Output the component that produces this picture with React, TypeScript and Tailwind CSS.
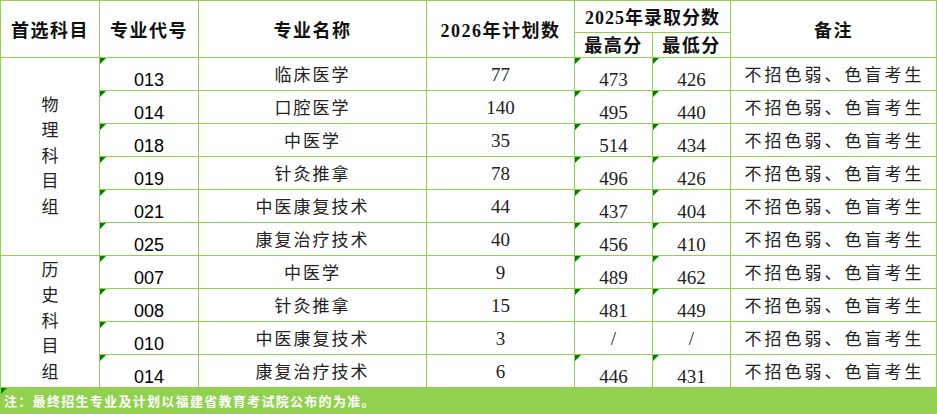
import React from 'react'

interface Row {
  code: string
  name: string
  plan: string
  high: string
  low: string
}

const physics: Row[] = [
  { code: '013', name: '临床医学', plan: '77', high: '473', low: '426' },
  { code: '014', name: '口腔医学', plan: '140', high: '495', low: '440' },
  { code: '018', name: '中医学', plan: '35', high: '514', low: '434' },
  { code: '019', name: '针灸推拿', plan: '78', high: '496', low: '426' },
  { code: '021', name: '中医康复技术', plan: '44', high: '437', low: '404' },
  { code: '025', name: '康复治疗技术', plan: '40', high: '456', low: '410' },
]

const history: Row[] = [
  { code: '007', name: '中医学', plan: '9', high: '489', low: '462' },
  { code: '008', name: '针灸推拿', plan: '15', high: '481', low: '449' },
  { code: '010', name: '中医康复技术', plan: '3', high: '/', low: '/' },
  { code: '014', name: '康复治疗技术', plan: '6', high: '446', low: '431' },
]

const serif = "font-['Liberation_Serif','Noto_Sans_CJK_SC',serif]"
const sans = "font-['Liberation_Sans','Noto_Sans_CJK_SC',sans-serif]"

// excel "number stored as text" marker
function Marker() {
  return (
    <span className="absolute top-0 left-0 w-0 h-0 border-t-[6px] border-t-[#008000] border-r-[6px] border-r-transparent" />
  )
}

function Head({ children, className = '' }: { children: React.ReactNode; className?: string }) {
  return (
    <div
      className={`bg-white flex items-center justify-center whitespace-nowrap font-bold text-[18px] tracking-[1.5px] text-[#111] ${serif} ${className}`}
    >
      {children}
    </div>
  )
}

function Group({ label, span }: { label: string; span: string }) {
  return (
    <div className={`bg-white flex flex-col items-center justify-center text-[17px] leading-[25.5px] text-[#222] ${serif} ${span}`}>
      {label.split('').map((ch, i) => (
        <span key={i}>{ch}</span>
      ))}
    </div>
  )
}

function DataRow({ row }: { row: Row }) {
  const hasScore = row.high !== '/'
  const scoreAlign = hasScore ? 'items-end pb-[1px] leading-none' : 'items-center pt-[2px]'
  return (
    <>
      <div className={`relative bg-white flex items-end justify-center pb-[1px] leading-none text-[18px] text-black ${sans}`}>
        <Marker />
        {row.code}
      </div>
      <div className={`bg-white flex items-center justify-center pt-[3px] text-[17px] tracking-[2px] text-[#222] ${serif}`}>
        {row.name}
      </div>
      <div className={`bg-white flex items-center justify-center pt-[2px] text-[19px] text-[#222] ${serif}`}>
        {row.plan}
      </div>
      <div className={`relative bg-white flex ${scoreAlign} justify-center text-[19px] text-[#222] ${serif}`}>
        {hasScore && <Marker />}
        {row.high}
      </div>
      <div className={`relative bg-white flex ${scoreAlign} justify-center text-[19px] text-[#222] ${serif}`}>
        {hasScore && <Marker />}
        {row.low}
      </div>
      <div className={`bg-white flex items-center justify-center pt-[3px] pl-[2px] whitespace-nowrap text-[17px] tracking-[3px] text-[#222] ${serif}`}>
        不招色弱、色盲考生
      </div>
    </>
  )
}

export default function App() {
  return (
    <div className="w-[937px] h-[414px] bg-white">
      <div className="grid grid-cols-[98px_98px_227px_147px_77px_77px_205px] grid-rows-[31px_24px_repeat(10,32px)_25px] gap-px p-px bg-[#92d050]">
        {/* Header */}
        <Head className="row-span-2 pt-[4px]">首选科目</Head>
        <Head className="row-span-2 pt-[4px]">专业代号</Head>
        <Head className="row-span-2 pt-[4px]">专业名称</Head>
        <Head className="row-span-2 pt-[4px]">2026年计划数</Head>
        <Head className="col-span-2 pt-[3px] tracking-[1px]">2025年录取分数</Head>
        <Head className="row-span-2 pt-[4px]">备注</Head>
        <Head className="pt-[2px]">最高分</Head>
        <Head className="pt-[2px]">最低分</Head>

        {/* Physics group */}
        <Group label="物理科目组" span="row-span-6" />
        {physics.map((r) => (
          <DataRow key={'p' + r.code} row={r} />
        ))}

        {/* History group */}
        <Group label="历史科目组" span="row-span-4" />
        {history.map((r) => (
          <DataRow key={'h' + r.code} row={r} />
        ))}

        {/* Footer note */}
        <div className={`relative col-span-7 flex items-center pl-[3px] pt-[2px] text-white font-bold text-[13px] tracking-[1.3px] ${serif}`}>
          <Marker />
          注：最终招生专业及计划以福建省教育考试院公布的为准。
        </div>
      </div>
    </div>
  )
}
